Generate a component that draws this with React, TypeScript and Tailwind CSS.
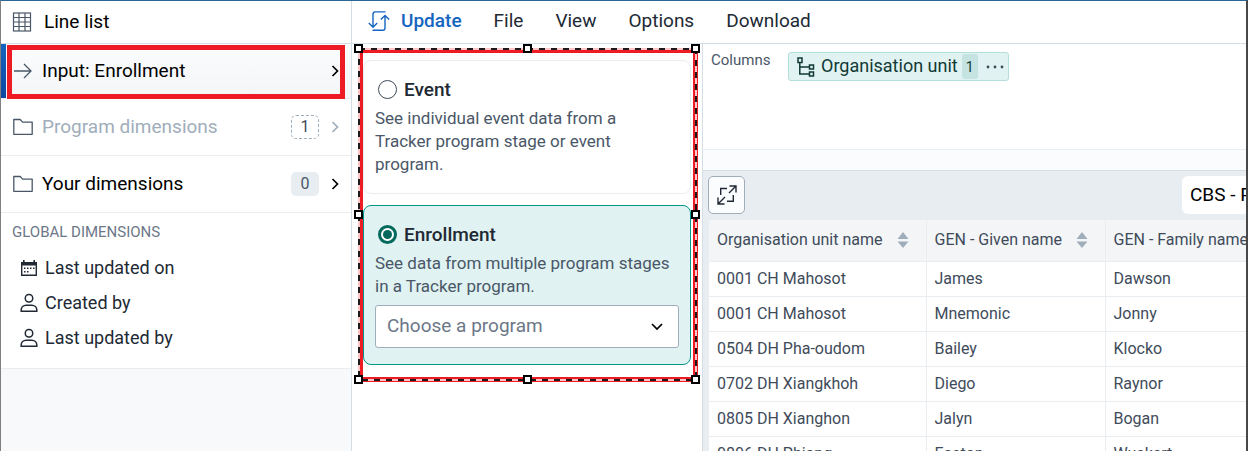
import React from "react";

type IconProps = { className?: string };

const TableIcon = () => (
  <svg width="20" height="20" viewBox="0 0 20 20" fill="none" stroke="#4a5768" strokeWidth="1.2">
    <rect x="1.5" y="1" width="17" height="18" />
    <path d="M1.5 5.5h17M1.5 10h17M1.5 14.5h17M7 1v18M13 1v18" />
  </svg>
);

const ArrowIcon = () => (
  <svg width="20" height="20" viewBox="0 0 20 20" fill="none" stroke="#4a5768" strokeWidth="1.3">
    <path d="M1 10h17M11 3l7 7-7 7" />
  </svg>
);

const FolderIcon = () => (
  <svg width="20" height="20" viewBox="0 0 20 20" fill="none" stroke="#4a5768" strokeWidth="1.3" strokeLinejoin="round">
    <path d="M.8 2.5h6.4l2.4 2.600h9.600v12.200H.8z" />
  </svg>
);

const Chevron = ({ className = "" }: IconProps) => (
  <svg className={className} width="8" height="12" viewBox="0 0 8 12" fill="none" stroke="currentColor" strokeWidth="1.7">
    <path d="M1.5 1l5 5-5 5" />
  </svg>
);

const CalendarIcon = () => (
  <svg width="18" height="18" viewBox="0 0 18 18" fill="#212934">
    <path fillRule="evenodd" d="M3 1h1.6v2h8.8V1H15v2h2v14H1V3h2zM2.4 6.500v9.100h13.200V6.500z" />
    <path d="M7 8.5h1.500v1.500H7zM10 8.500h1.500v1.500H10zM13 8.500h1.500v1.500H13zM4 8.500h1.500v1.500H4zM4 12h1.500v1.500H4zM7 12h1.500v1.500H7z" />
  </svg>
);

const UserIcon = () => (
  <svg width="18" height="20" viewBox="0 0 18 20" fill="none" stroke="#212934" strokeWidth="1.5">
    <rect x="5.3" y="1.5" width="7.4" height="7.6" rx="3.5" />
    <path d="M1.2 18.2v-1.4c0-2.6 2.2-4.6 5-4.6h5.6c2.8 0 5 2 5 4.6v1.4z" />
  </svg>
);

const UpdateIcon = () => (
  <svg width="22" height="20" viewBox="0 0 22 20" fill="none" stroke="#1565c0" strokeWidth="1.4">
    <path d="M17.5.9H7.2Q5 .9 5 3.2V16M.8 12L5 16.2 9.200 12M4.500 19.200H14.800Q17 19.200 17 17V4.500M12.800 8.600L17 4.400l4.200 4.200" />
  </svg>
);

const OrgUnitIcon = () => (
  <svg width="18" height="20" viewBox="0 0 18 20" fill="none" stroke="#103a35" strokeWidth="1.5">
    <path d="M1 1h4v4.500H1zM12.500 8h4v4h-4zM12.500 15h4v4h-4zM2.800 5.500V17h9.700M2.800 10h9.700" />
  </svg>
);

const ExpandIcon = () => (
  <svg width="20" height="20" viewBox="0 0 20 20" fill="none" stroke="#212934" strokeWidth="1.4">
    <path d="M12.500 1H19v6.500M19 1l-7 7M1 12.500V19h6.500M1 19l7-7M10 3.500H3.700V10M16.300 10v6.300H10" />
  </svg>
);

const SortIcon = () => (
  <svg width="12" height="16" viewBox="0 0 12 16" fill="#a0adba">
    <path d="M6 0l5.500 7H.5zM6 16L.5 9.500h11z" />
  </svg>
);

function Handle({ className }: { className: string }) {
  return <span className={`absolute size-[9px] border-2 border-black bg-white ${className}`} />;
}

function SelectionFrame() {
  return (
    <div className="pointer-events-none absolute top-[5px] right-[6px] bottom-[-15px] left-[7px]">
      <div className="absolute -top-px right-[-2px] bottom-[-2px] -left-px border-[5px] border-[#ed1c24]" />
      <svg className="absolute inset-0 size-full overflow-visible" fill="none" strokeWidth="2">
        <rect width="100%" height="100%" stroke="#ffc4c6" />
        <rect width="100%" height="100%" stroke="#1a1a1a" strokeDasharray="6 6" />
      </svg>
      <Handle className="top-[-5px] left-[-5px]" />
      <Handle className="top-[-5px] left-1/2 -ml-[5px]" />
      <Handle className="top-[-5px] right-[-4px]" />
      <Handle className="top-1/2 left-[-5px] -mt-[5px]" />
      <Handle className="top-1/2 right-[-4px] -mt-[5px]" />
      <Handle className="bottom-[-4px] left-[-5px]" />
      <Handle className="bottom-[-4px] left-1/2 -ml-[5px]" />
      <Handle className="right-[-4px] bottom-[-4px]" />
    </div>
  );
}

const globals = [
  { label: "Last updated on", icon: <CalendarIcon /> },
  { label: "Created by", icon: <UserIcon /> },
  { label: "Last updated by", icon: <UserIcon /> },
];

function Sidebar() {
  return (
    <aside className="flex w-[351px] shrink-0 flex-col border-r border-[#d5dde5] bg-[#f8f9fa] text-[19px] leading-6 text-black">
      <div className="flex h-[43px] shrink-0 items-center gap-3 border-b border-[#d5dde5] bg-white pl-[11px]">
        <TableIcon />
        <span>Line list</span>
      </div>
      <button className="relative z-10 flex h-[55px] shrink-0 items-center border-b border-[#e8edf2] bg-linear-to-b from-[#fbfcfd] to-[#f3f5f7] px-3 text-left">
        <span className="absolute inset-y-0 left-0 w-[5px] bg-linear-to-b from-[#1565c0] to-[#0d47a1]" />
        <ArrowIcon />
        <span className="ml-[9px] grow">Input: Enrollment</span>
        <Chevron />
        <span className="absolute top-px right-[6px] -bottom-px left-[6px] border-[5px] border-[#ed1c24]" />
      </button>
      <button className="flex h-[57px] shrink-0 items-center border-b border-[#e8edf2] bg-white px-3 text-left text-[#a0adba]">
        <FolderIcon />
        <span className="ml-[9px] grow">Program dimensions</span>
        <span className="mr-3 flex h-6 w-7 items-center justify-center rounded-[5px] border border-dashed border-[#a0adba] text-base text-[#404b5a]">1</span>
        <Chevron />
      </button>
      <button className="flex h-[57px] shrink-0 items-center border-b border-[#e8edf2] bg-white px-3 text-left">
        <FolderIcon />
        <span className="ml-[9px] grow">Your dimensions</span>
        <span className="mr-3 flex h-6 w-7 items-center justify-center rounded-[5px] bg-[#e8edf2] text-base text-[#4a5768]">0</span>
        <Chevron />
      </button>
      <section className="border-b border-[#e8edf2] bg-white pt-[7px] pb-[13px]">
        <h2 className="pl-[11px] text-[15px] leading-6 text-[#6c7787]">GLOBAL DIMENSIONS</h2>
        <ul className="mt-[6px] text-lg leading-6 text-[#212934]">
          {globals.map((g) => (
            <li key={g.label} className="flex h-[35px] items-center gap-[7px] pl-[19px]">
              {g.icon}
              <span>{g.label}</span>
            </li>
          ))}
        </ul>
      </section>
    </aside>
  );
}

function Radio({ checked = false, id, onChange }: { checked?: boolean; id: string; onChange: () => void }) {
  return (
    <span className="relative grid size-[19px] shrink-0 place-items-center">
      <input
        id={id}
        type="radio"
        name="input-type"
        checked={checked}
        onChange={onChange}
        className="peer size-[19px] appearance-none rounded-full border border-[#404b5a] bg-white checked:border-[3px] checked:border-[#00695c]"
      />
      <span className="pointer-events-none absolute hidden size-[9px] rounded-full bg-[#00695c] peer-checked:block" />
    </span>
  );
}

function InputPanel() {
  const [type, setType] = React.useState("enrollment");
  const card = "rounded-lg border px-[11px] pt-[17px]";
  const on = "border-[#009688] bg-[#e0f2f1]";
  const off = "border-[#e8edf2] bg-white";
  const description = "mt-[6px] pr-1 text-[17px] leading-[23px]";
  return (
    <div className="flex w-[351px] shrink-0 flex-col border-r border-[#d5dde5] bg-white text-[19px] leading-[23px] text-[#4a5768]">
      <div className="relative flex flex-col gap-[11px] px-[11px] pt-4">
        <div className={`${card} h-[134px] ${type === "event" ? on : off}`}>
          <div className="flex items-center gap-[7px] pl-[3px]">
            <Radio id="event" checked={type === "event"} onChange={() => setType("event")} />
            <label htmlFor="event" className="font-medium text-[#212934]">Event</label>
          </div>
          <p className={description}>See individual event data from a Tracker program stage or event program.</p>
        </div>
        <div className={`${card} h-[160px] ${type === "enrollment" ? on : off}`}>
          <div className="flex items-center gap-[7px] pl-[3px]">
            <Radio id="enrollment" checked={type === "enrollment"} onChange={() => setType("enrollment")} />
            <label htmlFor="enrollment" className="font-medium text-[#212934]">Enrollment</label>
          </div>
          <p className={description}>See data from multiple program stages in a Tracker program.</p>
          <div className="relative mt-[7px]">
            <select aria-label="Program" className="h-[43px] w-full appearance-none rounded-[3px] border border-[#a0adba] bg-white pb-[2px] pl-[11px] text-[#6c7787]">
              <option>Choose a program</option>
            </select>
            <svg className="pointer-events-none absolute top-[18px] right-4" width="12" height="8" viewBox="0 0 12 8" fill="none" stroke="#000" strokeWidth="1.7">
              <path d="M1 1l5 5 5-5" />
            </svg>
          </div>
        </div>
        <SelectionFrame />
      </div>
    </div>
  );
}

const headers = ["Organisation unit name", "GEN - Given name", "GEN - Family name"];
const rows = [
  ["0001 CH Mahosot", "James", "Dawson"],
  ["0001 CH Mahosot", "Mnemonic", "Jonny"],
  ["0504 DH Pha-oudom", "Bailey", "Klocko"],
  ["0702 DH Xiangkhoh", "Diego", "Raynor"],
  ["0805 DH Xianghon", "Jalyn", "Bogan"],
  ["0806 DH Phiang", "Easton", "Wuckert"],
];

function Visualization() {
  return (
    <main className="flex min-w-0 grow flex-col overflow-hidden bg-[#e8edf2]">
      <div className="flex h-[106px] shrink-0 items-start border-b border-[#e8edf2] bg-white pt-2 pl-2">
        <span className="w-[77px] text-[15px] leading-4 text-[#4a5768]">Columns</span>
        <div className="flex h-[29px] items-center rounded-[3px] border border-[#b2dfdb] bg-[#e0f2f1] pr-1 pl-2 text-lg leading-6 text-[#103a35]">
          <OrgUnitIcon />
          <span className="ml-[6px] pb-[2px]">Organisation unit</span>
          <span className="ml-1 flex h-[25px] w-4 items-center justify-center rounded-[3px] bg-[#c4e3e1] text-sm">1</span>
          <button aria-label="Organisation unit menu" className="ml-2">
            <svg width="18" height="4" viewBox="0 0 18 4" fill="#404b5a">
              <circle cx="2" cy="2" r="1.400" />
              <circle cx="9" cy="2" r="1.400" />
              <circle cx="16" cy="2" r="1.400" />
            </svg>
          </button>
        </div>
      </div>
      <div className="h-[21px] shrink-0 border-b border-[#d5dde5] bg-[#fbfcfd]" />
      <div className="flex h-[49px] shrink-0 items-start justify-between pt-[5px] pl-[5px]">
        <button aria-label="Expand" className="grid h-[38px] w-[37px] place-items-center rounded-[5px] border border-[#a0adba] bg-[#fbfcfd]">
          <ExpandIcon />
        </button>
        <div className="h-[38px] w-[64px] overflow-hidden rounded-l-md bg-white pl-2 text-[19px] leading-[38px] whitespace-nowrap text-black">
          CBS - Pregnancy
        </div>
      </div>
      <table className="ml-[6px] w-[640px] shrink-0 table-fixed border-collapse bg-white text-left text-base leading-5 text-[#404b5a]">
        <colgroup>
          <col className="w-[217px]" />
          <col className="w-[179px]" />
          <col />
        </colgroup>
        <thead>
          <tr className="h-[41px] bg-[#f3f5f7]">
            {headers.map((h) => (
              <th key={h} className="border-r border-b border-[#e8edf2] pl-2 font-normal whitespace-nowrap">
                <span className="flex items-center gap-[14px]">
                  {h}
                  <SortIcon />
                </span>
              </th>
            ))}
          </tr>
        </thead>
        <tbody>
          {rows.map((r, i) => (
            <tr key={i} className="h-[35px]">
              {r.map((c, j) => (
                <td key={j} className="border-r border-b border-[#e8edf2] pl-2">{c}</td>
              ))}
            </tr>
          ))}
        </tbody>
      </table>
    </main>
  );
}

export default function App() {
  return (
    <div className="flex h-screen overflow-hidden border-t border-r-2 border-l border-t-[#2c6693] border-r-[#484848] border-l-[#808080] bg-white font-[Roboto,sans-serif]">
      <Sidebar />
      <div className="flex min-w-0 grow flex-col">
        <nav className="flex h-[43px] shrink-0 items-center border-b border-[#d5dde5] pb-[2px] pl-4 text-[19px] leading-6 text-[#212934]">
          <button className="mr-8 flex items-center gap-[11px] font-medium text-[#1565c0]">
            <UpdateIcon />
            Update
          </button>
          <button className="mr-8">File</button>
          <button className="mr-8">View</button>
          <button className="mr-8">Options</button>
          <button>Download</button>
        </nav>
        <div className="flex min-h-0 grow">
          <InputPanel />
          <Visualization />
        </div>
      </div>
    </div>
  );
}
